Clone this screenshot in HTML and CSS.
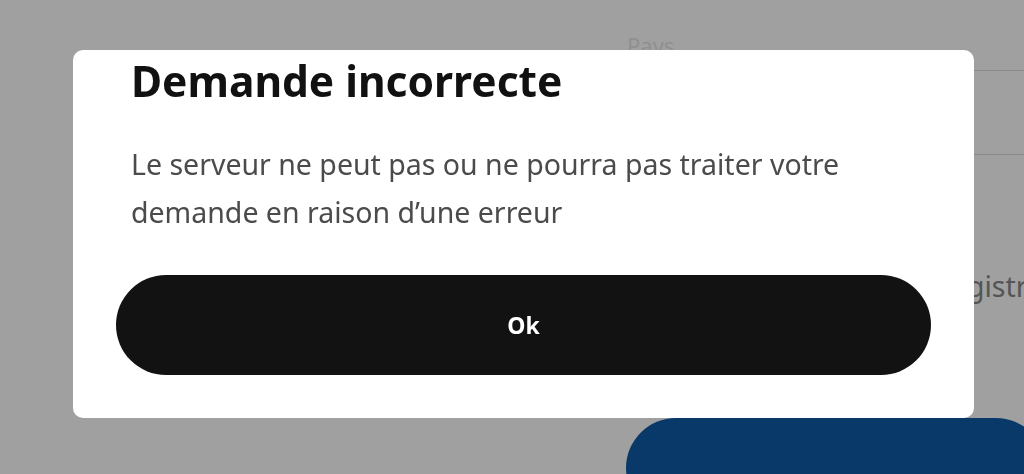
FILE: index.html
```html
<!DOCTYPE html>
<html lang="fr">
<head>
    <meta charset="UTF-8">
    <meta name="viewport" content="width=device-width, initial-scale=1.0">
    <title>Demande incorrecte</title>
    <link rel="stylesheet" href="styles.css">
</head>
<body>
<div class="page">
    <div class="side"></div>
    <div class="form">
        <div class="field">
            <span>Pays</span>
        </div>
        <div class="field second"></div>
        <div class="register">
            <span>S’enregistrer</span>
        </div>
        <button class="submit" type="button"></button>
    </div>
</div>

<div class="overlay">
    <div class="modal">
        <h1>Demande incorrecte</h1>
        <p>Le serveur ne peut pas ou ne pourra pas traiter votre demande en raison d’une erreur</p>
        <button class="ok" type="button">Ok</button>
    </div>
</div>
</body>
</html>
```

FILE: styles.css
```css
html, body {
    margin: 0;
    height: 100%;
    overflow: hidden;
}

body {
    background: #fff;
    font-family: "Noto Sans", "Open Sans", sans-serif;
}

.page {
    display: flex;
    height: 100%;
}

.side {
    width: 610px;
    flex-shrink: 0;
}

.form {
    flex: 1;
    display: flex;
    flex-direction: column;
    min-width: 0;
}

.form > * {
    flex-shrink: 0;
}

.field {
    height: 71px;
    box-sizing: border-box;
    border-bottom: 1px solid #dcdcdc;
    padding: 30px 0 0 17px;
    font-size: 22px;
    line-height: 30px;
    color: #e6e6e6;
}

.field.second {
    height: 84px;
    padding: 0;
}

.register {
    margin-top: 111px;
    padding-left: 277px;
    font-size: 28.5px;
    line-height: 40px;
    color: #888;
    white-space: nowrap;
}

.submit {
    margin: 112px 0 0 16px;
    width: 420px;
    height: 100px;
    border: none;
    border-radius: 50px;
    background: #0d5ca7;
}

.overlay {
    position: fixed;
    top: 0;
    left: 0;
    right: 0;
    bottom: 0;
    background: rgba(0, 0, 0, .373);
    padding: 50px 0 0 73px;
}

.modal {
    width: 901px;
    height: 368px;
    box-sizing: border-box;
    background: #fff;
    border-radius: 10px;
    padding: 7px 43px 43px;
    display: flex;
    flex-direction: column;
}

h1 {
    margin: 0;
    padding: 0 15px;
    font-size: 42.5px;
    line-height: 48px;
    font-weight: 700;
    color: #111;
}

p {
    margin: 35px 0 0;
    padding: 0 15px;
    font-size: 28.5px;
    line-height: 48px;
    color: #4b4b4b;
}

.ok {
    margin-top: auto;
    height: 100px;
    width: 100%;
    border: none;
    border-radius: 50px;
    background: #121212;
    color: #fff;
    font-family: "Noto Sans", "Open Sans", sans-serif;
    font-size: 23px;
    font-weight: 700;
}
```
